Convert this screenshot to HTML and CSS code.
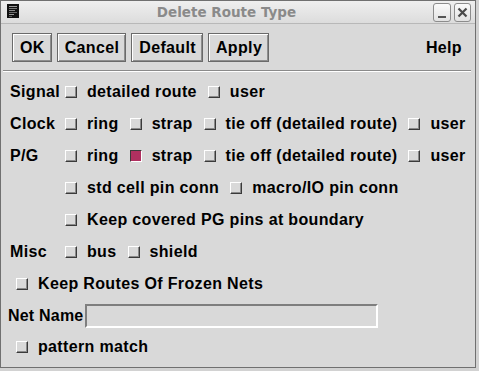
FILE: index.html
```html
<!DOCTYPE html>
<html>
<head>
<meta charset="utf-8">
<link rel="stylesheet" href="styles.css">
</head>
<body>
<div class="win">
  <div class="titlebar">
    <svg class="appicon" width="12" height="14" viewBox="0 0 12 14">
      <rect x="0" y="0" width="12" height="14" fill="#111"/>
      <rect x="2" y="2" width="8" height="1" fill="#9a9a9a"/>
      <rect x="2" y="4" width="8" height="1" fill="#7a7a7a"/>
      <rect x="2" y="6" width="6" height="1" fill="#8a8a8a"/>
      <rect x="2" y="8" width="8" height="1" fill="#6a6a6a"/>
      <rect x="2" y="10" width="5" height="1" fill="#9a9a9a"/>
      <rect x="2" y="12" width="3" height="1" fill="#5a5a5a"/>
    </svg>
    <div class="title">Delete Route Type</div>
    <div class="wbtn">
      <svg width="16" height="17" viewBox="0 0 16 17"><rect x="4" y="12" width="8" height="2" fill="#555"/></svg>
    </div>
    <div class="wbtn close">
      <svg width="15" height="17" viewBox="0 0 15 17"><path d="M3.5 4.5 L11.5 12.5 M11.5 4.5 L3.5 12.5" stroke="#4a4a4a" stroke-width="2.2" fill="none"/></svg>
    </div>
  </div>
  <div class="toolbar">
    <button class="btn">OK</button>
    <button class="btn">Cancel</button>
    <button class="btn">Default</button>
    <button class="btn">Apply</button>
    <span class="help">Help</span>
  </div>
  <div class="sep"></div>
  <div class="rows">
    <div class="row">
      <span class="lbl">Signal</span>
      <span class="opt"><i class="cb"></i>detailed route</span>
      <span class="opt"><i class="cb"></i>user</span>
    </div>
    <div class="row">
      <span class="lbl">Clock</span>
      <span class="opt"><i class="cb"></i>ring</span>
      <span class="opt"><i class="cb"></i>strap</span>
      <span class="opt"><i class="cb"></i>tie off (detailed route)</span>
      <span class="opt"><i class="cb"></i>user</span>
    </div>
    <div class="row">
      <span class="lbl">P/G</span>
      <span class="opt"><i class="cb"></i>ring</span>
      <span class="opt"><i class="cb on"></i>strap</span>
      <span class="opt"><i class="cb"></i>tie off (detailed route)</span>
      <span class="opt"><i class="cb"></i>user</span>
    </div>
    <div class="row">
      <span class="lbl"></span>
      <span class="opt"><i class="cb"></i>std cell pin conn</span>
      <span class="opt"><i class="cb"></i>macro/IO pin conn</span>
    </div>
    <div class="row">
      <span class="lbl"></span>
      <span class="opt"><i class="cb"></i>Keep covered PG pins at boundary</span>
    </div>
    <div class="row">
      <span class="lbl">Misc</span>
      <span class="opt"><i class="cb"></i>bus</span>
      <span class="opt"><i class="cb"></i>shield</span>
    </div>
    <div class="row indent">
      <span class="opt"><i class="cb"></i>Keep Routes Of Frozen Nets</span>
    </div>
    <div class="row netrow">
      <span class="netlbl">Net Name</span>
      <span class="entry"></span>
    </div>
    <div class="row indent last">
      <span class="opt"><i class="cb"></i>pattern match</span>
    </div>
  </div>
</div>
</body>
</html>
```

FILE: styles.css
```css
html, body {
  margin: 0;
  padding: 0;
  background: #d2d2d2;
  width: 479px;
  height: 371px;
  overflow: hidden;
}

.win {
  width: 476px;
  height: 368px;
  box-sizing: border-box;
  border: 1px solid #707070;
  background: #d9d9d9;
  font-family: "Liberation Sans", Arial, sans-serif;
  font-weight: bold;
  font-size: 16px;
  letter-spacing: 0.35px;
  color: #000;
}

.titlebar {
  height: 22px;
  border-bottom: 1px solid #b8b8b8;
  background: linear-gradient(#efefef, #dcdcdc);
  display: flex;
  align-items: center;
  letter-spacing: 0;
}

.appicon {
  margin-left: 6px;
  margin-top: -3px;
  flex: none;
}

.title {
  flex: 1;
  text-align: center;
  font-family: "DejaVu Sans", sans-serif;
  font-weight: bold;
  font-size: 13.5px;
  color: #8a8a8a;
  padding-left: 4px;
}

.wbtn {
  width: 18px;
  height: 19px;
  box-sizing: border-box;
  border: 1px solid #8c8c8c;
  border-radius: 3px;
  background: linear-gradient(#fafafa, #e2e2e2);
  margin-left: 3px;
  display: flex;
  align-items: center;
  justify-content: center;
  margin-top: 1px;
}

.wbtn.close {
  width: 17px;
  margin-right: 4px;
}

.toolbar {
  display: flex;
  align-items: center;
  gap: 5px;
  padding: 9px 0 0 11px;
  height: 29px;
}

.btn {
  height: 29px;
  box-sizing: border-box;
  border: 1px solid #6a6a6a;
  box-shadow: inset 1px 1px #ffffff, inset -1px -1px #8e8e8e;
  background: #d9d9d9;
  font: inherit;
  letter-spacing: inherit;
  color: #000;
  padding: 0 6px 0 7px;
  margin: 0;
  line-height: 27px;
}

.help {
  margin-left: auto;
  margin-right: 13px;
}

.sep {
  margin: 8px 4px 0 2px;
  height: 1px;
  border-bottom: 1px solid #ffffff;
  background: #8a8a8a;
}

.rows {
  margin-top: 4px;
}

.row {
  display: flex;
  align-items: center;
  height: 32px;
  padding-left: 9px;
}

.row.indent {
  padding-left: 15px;
}

.row.last {
  height: 29px;
}

.lbl {
  width: 55px;
  flex: none;
}

.opt {
  display: flex;
  align-items: center;
  gap: 10px;
  margin-right: 11px;
  white-space: nowrap;
}

.cb {
  display: block;
  width: 12px;
  height: 12px;
  box-sizing: border-box;
  border: 1px solid;
  border-color: #ffffff #3a3a3a #3a3a3a #ffffff;
  box-shadow: inset -1px -1px #8a8a8a;
  background: #d9d9d9;
  flex: none;
}

.cb.on {
  border-color: #3a3a3a #ffffff #ffffff #3a3a3a;
  box-shadow: none;
  background: #b03060;
}

.netrow {
  padding-left: 7px;
}

.netlbl {
  white-space: nowrap;
  letter-spacing: 0.2px;
}

.entry {
  display: block;
  width: 293px;
  height: 24px;
  box-sizing: border-box;
  margin-left: 2px;
  border: 2px solid;
  border-color: #7e7e7e #ffffff #ffffff #7e7e7e;
  background: #d9d9d9;
}
```
